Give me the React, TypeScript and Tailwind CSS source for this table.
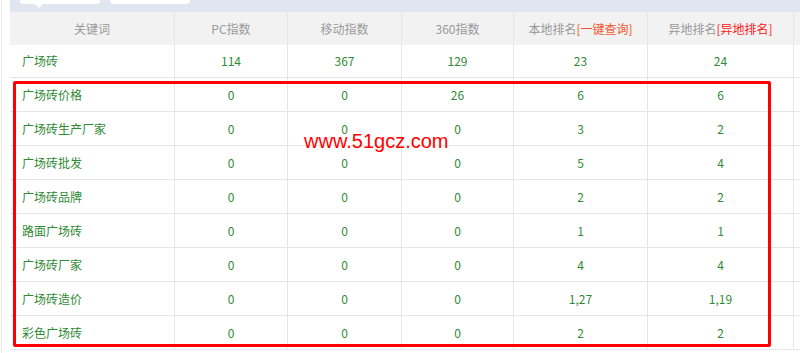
const cols = ['w-[165px]', 'w-[113px]', 'w-[114px]', 'w-[112px]', 'w-[134px]', 'w-[146px]'];

const rows: [string, string, string, string, string, string][] = [
  ['广场砖', '114', '367', '129', '23', '24'],
  ['广场砖价格', '0', '0', '26', '6', '6'],
  ['广场砖生产厂家', '0', '0', '0', '3', '2'],
  ['广场砖批发', '0', '0', '0', '5', '4'],
  ['广场砖品牌', '0', '0', '0', '2', '2'],
  ['路面广场砖', '0', '0', '0', '1', '1'],
  ['广场砖厂家', '0', '0', '0', '4', '4'],
  ['广场砖造价', '0', '0', '0', '1,27', '1,19'],
  ['彩色广场砖', '0', '0', '0', '2', '2'],
];

const font = "font-['Microsoft_YaHei','Noto_Sans_CJK_SC',sans-serif]";

export default function App() {
  return (
    <div className={`relative flex h-[353px] w-[800px] overflow-hidden bg-white text-[12px] ${font}`}>
      <div className="w-[10px] shrink-0">
        <div className="ml-[1px] h-full w-[1px] bg-[#ececec]" />
      </div>
      <div className="flex flex-1 flex-col">
        <div className="relative flex h-[12px] gap-[10px] bg-[#e1e5ef] pl-[10px]">
          <div className="h-[4px] w-[80px] rounded-b-[5px] bg-white" />
          <div className="h-[4px] w-[80px] rounded-b-[5px] bg-white" />
          <div className="absolute left-[25px] top-[4px] h-0 w-0 border-x-[4px] border-t-[4px] border-x-transparent border-t-white" />
        </div>
        <div className="flex h-[33px] bg-[#f2f2f2] text-[#999]">
          {['关键词', 'PC指数', '移动指数', '360指数'].map((t, i) => (
            <div key={t} className={`${cols[i]} flex items-center justify-center border-r border-[#e6e6e6]`}>
              {t}
            </div>
          ))}
          <div className={`${cols[4]} flex items-center justify-center border-r border-[#e6e6e6]`}>
            本地排名<span className="text-[#f2542a]">[一键查询]</span>
          </div>
          <div className={`${cols[5]} flex items-center justify-center border-r border-[#e6e6e6]`}>
            异地排名<span className="text-[#ff2020]">[异地排名]</span>
          </div>
        </div>
        {rows.map((r, ri) => (
          <div key={r[0]} className={`flex ${ri === 0 ? 'h-[33px]' : 'h-[34px]'} border-b border-[#e6e6e6] text-[#2f8a35]`}>
            {r.map((c, i) => (
              <div
                key={i}
                className={`${cols[i]} flex items-center border-r border-[#e6e6e6] ${i === 0 ? 'pl-[12px]' : 'justify-center'}`}
              >
                {c}
              </div>
            ))}
          </div>
        ))}
      </div>

      {/* annotation overlay */}
      <div className="pointer-events-none absolute left-[13px] top-[81px] h-[266px] w-[758px] rounded-[2px] border-[3px] border-[#ff0000]" />
      <span className="absolute left-[304px] top-[126px] font-['Liberation_Sans',sans-serif] text-[20px] text-[#ff0000]">
        www.51gcz.com
      </span>
    </div>
  );
}
